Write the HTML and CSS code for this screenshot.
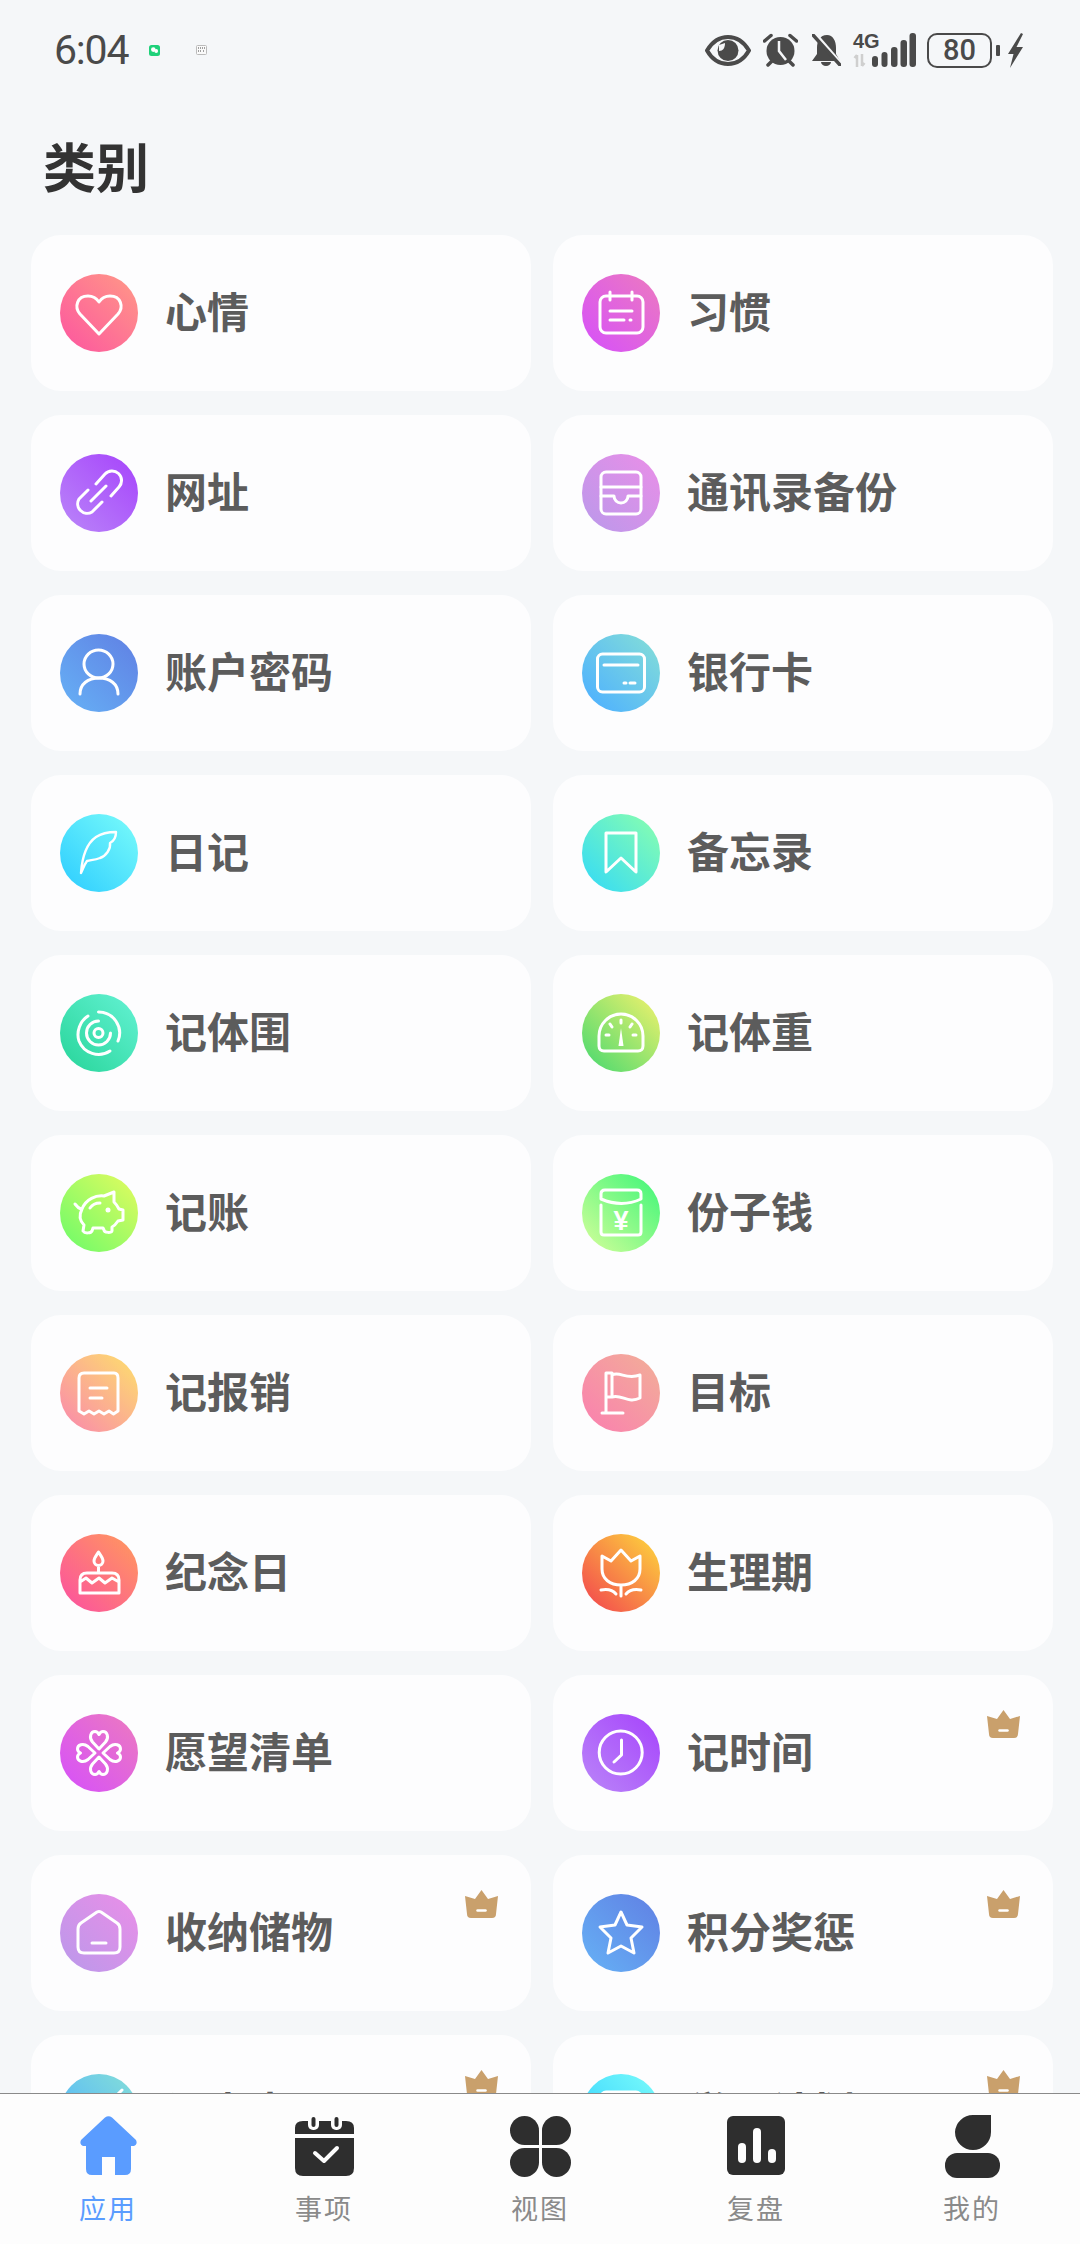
FILE: index.html
```html
<!DOCTYPE html>
<html lang="zh-CN">
<head>
    <meta charset="UTF-8">
    <meta name="viewport" content="width=device-width, initial-scale=1.0">
    <title>类别</title>
    <link rel="stylesheet" href="styles.css">
</head>
<body>
    <header class="status-bar">
        <div class="status-left">
            <span class="time">6:04</span>
            <svg class="note-wechat" viewBox="0 0 11 11"><rect width="11" height="11" rx="2.5" fill="#1fd17a"/><circle cx="4.3" cy="4.6" r="2.3" fill="#fff"/><circle cx="7.2" cy="6" r="1.9" fill="#fff"/></svg>
            <svg class="note-sim" viewBox="0 0 11 10"><rect x="0.5" y="0.5" width="10" height="9" rx="1" fill="#fafafa" stroke="#bbb"/><path d="M2 3H9M2 6H5M7 6H9" stroke="#444" stroke-dasharray="1 1"/></svg>
        </div>
        <div class="status-right">
            <svg class="st-eye" viewBox="0 0 46 31"><path d="M2 15.5C8 5.500 15 2 23 2S38 5.500 44 15.500C38 26 31 29 23 29S8 26 2 15.500Z" fill="none" stroke="#4a4a4a" stroke-width="4" stroke-linejoin="round"/><circle cx="23" cy="15.500" r="10.500" fill="#4a4a4a"/><path d="M14 16C18 16 20 13 20 8L14 10Z" fill="#f5f6f8"/></svg>
            <svg class="st-alarm" viewBox="0 0 35 34"><circle cx="17.500" cy="18" r="14" fill="#4a4a4a"/><path d="M1.500 8L8 2.500M27 2.500L33.500 8M5 32L9 28M30 32L26 28" stroke="#4a4a4a" stroke-width="3.500" stroke-linecap="round"/><path d="M16 8V18L23 27" fill="none" stroke="#f5f6f8" stroke-width="2.500"/></svg>
            <svg class="st-bell" viewBox="0 0 29 32"><path d="M15 1C8 1 5 7 5 14V20L0 27H28L24 20V14C24 7 21 1 15 1Z" fill="#4a4a4a"/><path d="M9 28A5 4 0 0 0 19 28Z" fill="#4a4a4a"/><path d="M3 0L29 30" stroke="#f5f6f8" stroke-width="4"/><path d="M1 1L28 31" stroke="#4a4a4a" stroke-width="3.500" stroke-linecap="round"/></svg>
            <svg class="st-net" viewBox="0 0 63 35"><text class="st-4g" x="0" y="15">4G</text><path d="M4 22V34M1.500 25L4 22M9 21V33M9 33L11.500 30" fill="none" stroke="#cfcfcf" stroke-width="2.500"/><rect x="19" y="23" width="6" height="11" rx="3"/><rect x="28.500" y="19" width="6" height="15" rx="3"/><rect x="38" y="14" width="6.500" height="20" rx="3"/><rect x="47.500" y="7" width="6.500" height="27" rx="3"/><rect x="56.500" y="0" width="6.500" height="34" rx="3"/></svg>
            <div class="battery"><span class="battery-level">80</span></div>
            <span class="battery-tip"></span>
            <svg class="st-bolt" viewBox="0 0 15 35"><path d="M13 0L0 21H5.500L2 35L15 14H8.500L15 1Z" fill="#4a4a4a"/></svg>
        </div>
    </header>

    <main class="content">
        <h1 class="page-title">类别</h1>
        <div class="category-grid">

            <a class="card">
                <span class="cat-icon g-rose"><svg viewBox="0 0 78 78"><path d="M39 60L20 40C14 33 17 22 28 22C33 22 37 25 39 28C41 25 45 22 50 22C61 22 64 33 58 40Z"/></svg></span>
                <span class="card-label">心情</span>
            </a>
            <a class="card">
                <span class="cat-icon g-magenta"><svg viewBox="0 0 78 78"><rect x="18" y="22" width="43" height="37" rx="6"/><path d="M28 18V26M50 18V26M28 37H50M28 46H42M48 46H49"/></svg></span>
                <span class="card-label">习惯</span>
            </a>

            <a class="card">
                <span class="cat-icon g-violet"><svg viewBox="0 0 78 78"><path d="M36 30L45 20A9.500 9.500 0 0 1 59 33L51 42M42 48L32 58A9.500 9.500 0 0 1 19 45L28 36M31 47L46 32"/></svg></span>
                <span class="card-label">网址</span>
            </a>
            <a class="card">
                <span class="cat-icon g-orchid"><svg viewBox="0 0 78 78"><rect x="19" y="18" width="40" height="42" rx="5"/><path d="M19 33H59M19 42H32A7 7 0 0 0 46 42H59"/></svg></span>
                <span class="card-label">通讯录备份</span>
            </a>

            <a class="card">
                <span class="cat-icon g-blue"><svg viewBox="0 0 78 78"><ellipse cx="38.500" cy="30" rx="14.500" ry="14"/><path d="M20 60C20 50 28 44 39 44C50 44 58 50 58 60"/></svg></span>
                <span class="card-label">账户密码</span>
            </a>
            <a class="card">
                <span class="cat-icon g-sky"><svg viewBox="0 0 78 78"><rect x="15.500" y="20" width="47" height="38" rx="5"/><path d="M22 31H56M42 49H44M48 49H53"/></svg></span>
                <span class="card-label">银行卡</span>
            </a>

            <a class="card">
                <span class="cat-icon g-cyan"><svg viewBox="0 0 78 78"><path class="thin" d="M21 59C22 45 26 30 36 23C42 19 50 18 56 18C56 24 54 27 50 29C51 35 46 42 40 44C35 46 31 46 27 47C24 51 23 55 21 59Z"/></svg></span>
                <span class="card-label">日记</span>
            </a>
            <a class="card">
                <span class="cat-icon g-mint"><svg viewBox="0 0 78 78"><path d="M24 19H54V58L39 44L24 58Z"/></svg></span>
                <span class="card-label">备忘录</span>
            </a>

            <a class="card">
                <span class="cat-icon g-teal"><svg viewBox="0 0 78 78"><circle cx="38.500" cy="39" r="4.500"/><path d="M50.500 39A12 12 0 1 1 38.500 27M38.500 18A21 21 0 0 1 58 47M50 57A21 21 0 0 1 19 47C16 38 20 27 28 22"/></svg></span>
                <span class="card-label">记体围</span>
            </a>
            <a class="card">
                <span class="cat-icon g-lime"><svg viewBox="0 0 78 78"><path d="M22 57C19 57 17 55 17 52V42A22 22 0 0 1 61 42V52C61 55 59 57 56 57ZM39 26V29M28 30L30 33M50 30L48 33M24 41H27M51 41H54"/><path class="solid" d="M39 34L41.500 52H36.500Z"/></svg></span>
                <span class="card-label">记体重</span>
            </a>

            <a class="card">
                <span class="cat-icon g-leaf"><svg viewBox="0 0 78 78"><path d="M22 35C26 25 36 21 44 22L54 18V28C57 31 58 33 59 35L63 36V46L58 47C56 50 54 52 52 53V57C52 59 44 59 44 56L43 54H33L32 57C31 59 25 60 23 57L24 51C20 47 19 41 22 35ZM15 30Q18 34 21 35M30 34C32 31 36 29 40 29"/><circle class="solid" cx="48" cy="36" r="2.500"/></svg></span>
                <span class="card-label">记账</span>
            </a>
            <a class="card">
                <span class="cat-icon g-green"><svg viewBox="0 0 78 78"><path d="M19 20Q19 16 23 16H55Q59 16 59 20V25Q40 34 19 25ZM19 31V58Q19 61 22 61H56Q59 61 59 58V31"/><text class="yen" x="39" y="56">¥</text></svg></span>
                <span class="card-label">份子钱</span>
            </a>

            <a class="card">
                <span class="cat-icon g-peach"><svg viewBox="0 0 78 78"><path d="M19 57V24Q19 19 24 19H54Q58 19 58 24V57L53.500 60L49 57L44 60L39 57L34 60L29 57L24 60ZM30 34H47M30 44H42"/></svg></span>
                <span class="card-label">记报销</span>
            </a>
            <a class="card">
                <span class="cat-icon g-salmon"><svg viewBox="0 0 78 78"><path d="M20 59H41M24 59V19H30V43H24M30 21C38 17 44 26 58 21V44C46 50 40 40 30 43"/></svg></span>
                <span class="card-label">目标</span>
            </a>

            <a class="card">
                <span class="cat-icon g-coral"><svg viewBox="0 0 78 78"><path d="M38.500 18C41 22 43 24 43 27A4.500 4.500 0 0 1 34 27C34 24 36 22 38.500 18ZM38.500 32V38M20 59V46Q20 39 27 39H52Q59 39 59 46V59ZM20 48L26 44L32 49L39 44L45 49L52 44L59 48"/></svg></span>
                <span class="card-label">纪念日</span>
            </a>
            <a class="card">
                <span class="cat-icon g-amber"><svg viewBox="0 0 78 78"><path d="M20 22L29 27L39 16L49 27L58 22V35C58 45 50 51 39 51C28 51 20 45 20 35ZM39 51V62M19 56Q29 54 34 60M59 56Q49 54 44 60"/></svg></span>
                <span class="card-label">生理期</span>
            </a>

            <a class="card">
                <span class="cat-icon g-magenta"><svg viewBox="0 0 78 78"><path d="M39 35L32.500 28C28.500 23 31 17.500 35 17.500C37 17.500 38 18.500 39 20.500C40 18.500 41 17.500 43 17.500C47 17.500 49.500 23 45.500 28Z"/><path d="M39 35L32.500 28C28.500 23 31 17.500 35 17.500C37 17.500 38 18.500 39 20.500C40 18.500 41 17.500 43 17.500C47 17.500 49.500 23 45.500 28Z" transform="rotate(90 39 39)"/><path d="M39 35L32.500 28C28.500 23 31 17.500 35 17.500C37 17.500 38 18.500 39 20.500C40 18.500 41 17.500 43 17.500C47 17.500 49.500 23 45.500 28Z" transform="rotate(180 39 39)"/><path d="M39 35L32.500 28C28.500 23 31 17.500 35 17.500C37 17.500 38 18.500 39 20.500C40 18.500 41 17.500 43 17.500C47 17.500 49.500 23 45.500 28Z" transform="rotate(270 39 39)"/></svg></span>
                <span class="card-label">愿望清单</span>
            </a>
            <a class="card">
                <span class="cat-icon g-violet"><svg viewBox="0 0 78 78"><circle cx="38.700" cy="38.500" r="21.500"/><path d="M39.500 26V41L32 48"/></svg></span>
                <span class="card-label">记时间</span>
                <svg class="crown" viewBox="0 0 33 28"><path d="M16.500 0L23 9L33 6L31 24Q31 28 27 28H6Q2 28 2 24L0 6L10 9Z"/><path class="crown-bar" d="M12.500 20.500H20.500"/></svg>
            </a>

            <a class="card">
                <span class="cat-icon g-orchid"><svg viewBox="0 0 78 78"><path d="M18 35Q18 31 21 29L37 18Q39 17 41 18L57 29Q60 31 60 35V53Q60 59 54 59H24Q18 59 18 53ZM32 49H46"/></svg></span>
                <span class="card-label">收纳储物</span>
                <svg class="crown" viewBox="0 0 33 28"><path d="M16.500 0L23 9L33 6L31 24Q31 28 27 28H6Q2 28 2 24L0 6L10 9Z"/><path class="crown-bar" d="M12.500 20.500H20.500"/></svg>
            </a>
            <a class="card">
                <span class="cat-icon g-blue"><svg viewBox="0 0 78 78"><path d="M39 18L45 31L60 33L49 44L52 59L39 52L26 59L29 44L18 33L33 31Z"/></svg></span>
                <span class="card-label">积分奖惩</span>
                <svg class="crown" viewBox="0 0 33 28"><path d="M16.500 0L23 9L33 6L31 24Q31 28 27 28H6Q2 28 2 24L0 6L10 9Z"/><path class="crown-bar" d="M12.500 20.500H20.500"/></svg>
            </a>

            <a class="card">
                <span class="cat-icon g-sky"><svg viewBox="0 0 78 78"><path d="M56 22H24Q19 22 19 27V54Q19 59 24 59H54Q59 59 59 54V36M62 16L44 34"/></svg></span>
                <span class="card-label">记事本</span>
                <svg class="crown" viewBox="0 0 33 28"><path d="M16.500 0L23 9L33 6L31 24Q31 28 27 28H6Q2 28 2 24L0 6L10 9Z"/><path class="crown-bar" d="M12.500 20.500H20.500"/></svg>
            </a>
            <a class="card">
                <span class="cat-icon g-cyan"><svg viewBox="0 0 78 78"><rect x="19" y="18" width="40" height="42" rx="5"/><path d="M28 32H50M28 44H42"/></svg></span>
                <span class="card-label">学习计划</span>
                <svg class="crown" viewBox="0 0 33 28"><path d="M16.500 0L23 9L33 6L31 24Q31 28 27 28H6Q2 28 2 24L0 6L10 9Z"/><path class="crown-bar" d="M12.500 20.500H20.500"/></svg>
            </a>

        </div>
    </main>

    <nav class="tab-bar">
        <a class="tab tab-active">
            <span class="tab-box"><svg width="57" height="60" viewBox="0 0 57 60"><path class="home" d="M25 1.500Q28.500 -1 32 1.500L56 24Q58 28 54 30H51V53Q51 59 45 59H35V41H22V59H12Q6 59 6 53V30H3Q-1 28 1 24Z"/></svg></span>
            <span class="tab-label">应用</span>
        </a>
        <a class="tab">
            <span class="tab-box"><svg width="59" height="60" viewBox="0 0 59 60"><path d="M0 18V12Q0 5 8 5H51Q59 5 59 12V18ZM0 22H59V52Q59 60 51 60H8Q0 60 0 52Z"/><rect class="cut" x="13" y="0" width="11" height="14" rx="5"/><rect class="cut" x="36" y="0" width="11" height="14" rx="5"/><rect x="16.500" y="1" width="4" height="10" rx="2"/><rect x="39.500" y="1" width="4" height="10" rx="2"/><path class="tick" d="M20 37L29 45L42 32"/></svg></span>
            <span class="tab-label">事项</span>
        </a>
        <a class="tab">
            <span class="tab-box"><svg width="61" height="61" viewBox="0 0 61 61"><path d="M29 14.500A14.500 14.500 0 1 0 14.500 29H29Z"/><path d="M32 14.500A14.500 14.500 0 1 1 46.500 29H32Z"/><path d="M29 46.500A14.500 14.500 0 1 1 14.500 32H29Z"/><path d="M32 46.500A14.500 14.500 0 1 0 46.500 32H32Z"/></svg></span>
            <span class="tab-label">视图</span>
        </a>
        <a class="tab">
            <span class="tab-box"><svg width="58" height="60" viewBox="0 0 58 60"><rect width="58" height="59" rx="6"/><rect class="cut" x="11" y="27" width="8" height="20" rx="4"/><rect class="cut" x="26" y="12" width="8" height="35" rx="4"/><rect class="cut" x="41" y="33" width="8" height="14" rx="4"/></svg></span>
            <span class="tab-label">复盘</span>
        </a>
        <a class="tab">
            <span class="tab-box"><svg width="55" height="63" viewBox="0 0 55 63"><path d="M28 0H46V17A18 18 0 1 1 10 17A18 18 0 0 1 28 0Z"/><rect y="38" width="55" height="25" rx="12"/></svg></span>
            <span class="tab-label">我的</span>
        </a>
    </nav>
</body>
</html>
```

FILE: styles.css
```css
html, body {
    margin: 0;
    height: 100%;
}
body {
    width: 1080px;
    height: 2244px;
    display: flex;
    flex-direction: column;
    overflow: hidden;
    background-color: #f5f7f9;
    font-family: "Noto Sans CJK SC", "Noto Sans", sans-serif;
}

/* status bar */
.status-bar {
    flex: none;
    height: 100px;
    display: flex;
    justify-content: space-between;
    align-items: center;
    padding: 0 57px 0 54px;
}
.status-left {
    display: flex;
    align-items: center;
}
.time {
    font-family: Roboto, sans-serif;
    font-size: 41px;
    letter-spacing: -1.2px;
    color: #4a4a4a;
    width: 95px;
}
.note-wechat {
    width: 11px;
    height: 11px;
}
.note-sim {
    width: 11px;
    height: 10px;
    margin-left: 36px;
}
.status-right {
    display: flex;
    align-items: center;
}
.st-eye {
    width: 46px;
    height: 31px;
}
.st-alarm {
    width: 35px;
    height: 34px;
    margin-left: 12px;
}
.st-bell {
    width: 29px;
    height: 32px;
    margin-left: 14px;
}
.st-net {
    width: 63px;
    height: 35px;
    margin-left: 12px;
    fill: #4a4a4a;
    overflow: visible;
}
.st-4g {
    font-family: "Liberation Sans", sans-serif;
    font-weight: 700;
    font-size: 20px;
}
.battery {
    box-sizing: border-box;
    width: 65px;
    height: 35px;
    margin-left: 11px;
    display: flex;
    align-items: center;
    justify-content: center;
    border: 2.5px solid #4a4a4a;
    border-radius: 10px;
}
.battery-level {
    font-family: Roboto, sans-serif;
    font-size: 29px;
    font-weight: 500;
    color: #4a4a4a;
}
.battery-tip {
    width: 4px;
    height: 11px;
    margin-left: 4px;
    background: #4a4a4a;
    border-radius: 1px;
}
.st-bolt {
    width: 15px;
    height: 35px;
    margin-left: 8px;
}

/* list */
.content {
    flex: 1;
    min-height: 0;
    overflow: hidden;
}
.page-title {
    margin: 36px 0 41px 43px;
    font-size: 53px;
    line-height: 58px;
    font-weight: 700;
    color: #333;
}
.category-grid {
    display: grid;
    grid-template-columns: 500px 500px;
    grid-auto-rows: 156px;
    gap: 24px 22px;
    padding-left: 31px;
}
.card {
    position: relative;
    display: flex;
    align-items: center;
    padding-left: 29px;
    background: #fdfdfe;
    border-radius: 30px;
}
.card-label {
    margin-left: 27px;
    margin-top: -7px;
    font-size: 42px;
    font-weight: 700;
    color: #5c5c5c;
}
.cat-icon {
    flex: none;
    width: 78px;
    height: 78px;
    border-radius: 50%;
}
.cat-icon svg {
    display: block;
    width: 78px;
    height: 78px;
    fill: none;
    stroke: #fff;
    stroke-width: 3;
    stroke-linecap: round;
    stroke-linejoin: round;
}
.cat-icon .thin {
    stroke-width: 2.4;
}
.cat-icon .solid {
    fill: #fff;
    stroke: none;
}
.cat-icon .yen {
    fill: #fff;
    stroke: none;
    font-family: "Liberation Sans", sans-serif;
    font-weight: 700;
    font-size: 27px;
    text-anchor: middle;
}
.crown {
    position: absolute;
    top: 35px;
    right: 33px;
    width: 33px;
    height: 28px;
    fill: #c9a06c;
}
.crown-bar {
    stroke: #fff;
    stroke-width: 2.5;
    stroke-linecap: round;
}

/* icon gradients */
.g-rose { background: linear-gradient(225deg, #ff8f8a 15%, #fd5f9c 85%); }
.g-magenta { background: linear-gradient(225deg, #e974c8 15%, #d956f2 85%); }
.g-violet { background: linear-gradient(225deg, #a94dfb 15%, #b77cf9 85%); }
.g-orchid { background: linear-gradient(225deg, #e390e8 15%, #c197ea 85%); }
.g-blue { background: linear-gradient(225deg, #6187e6 15%, #65aaf3 85%); }
.g-sky { background: linear-gradient(225deg, #7dd8dd 15%, #53b5fb 85%); }
.g-cyan { background: linear-gradient(225deg, #6ff5fb 15%, #37d3fe 85%); }
.g-mint { background: linear-gradient(225deg, #7efab8 15%, #3fdfed 85%); }
.g-teal { background: linear-gradient(225deg, #5beecb 15%, #30d9a2 85%); }
.g-lime { background: linear-gradient(225deg, #d9ee6d 15%, #5edc6f 85%); }
.g-leaf { background: linear-gradient(225deg, #d2fb60 15%, #7cfb68 85%); }
.g-green { background: linear-gradient(225deg, #53f77d 15%, #bffd95 85%); }
.g-peach { background: linear-gradient(225deg, #fdd375 15%, #fa94a4 85%); }
.g-salmon { background: linear-gradient(225deg, #f3a89b 15%, #f986ac 85%); }
.g-coral { background: linear-gradient(225deg, #ff8f66 15%, #fc5a97 85%); }
.g-amber { background: linear-gradient(225deg, #fcc33f 15%, #f4574c 85%); }

/* bottom tabs */
.tab-bar {
    flex: none;
    height: 150px;
    display: grid;
    grid-template-columns: repeat(5, 1fr);
    background: #fdfdfd;
    border-top: 1px solid #8a8a8a;
}
.tab {
    display: flex;
    flex-direction: column;
    align-items: center;
    padding-top: 22px;
    color: #8a8a8a;
    font-size: 27px;
}
.tab-box {
    height: 60px;
    display: flex;
    align-items: center;
    fill: #2e2e2e;
}
.tab-box svg {
    display: block;
    flex: none;
    overflow: visible;
}
.tab-label {
    margin-top: 14px;
    line-height: 36px;
    letter-spacing: 2px;
}
.tab-active {
    color: #5a9cff;
}
.tab-box .home {
    fill: #5a9cff;
}
.tab-box .cut {
    fill: #fdfdfd;
}
.tab-box .tick {
    fill: none;
    stroke: #fdfdfd;
    stroke-width: 4;
    stroke-linecap: round;
    stroke-linejoin: round;
}
```
